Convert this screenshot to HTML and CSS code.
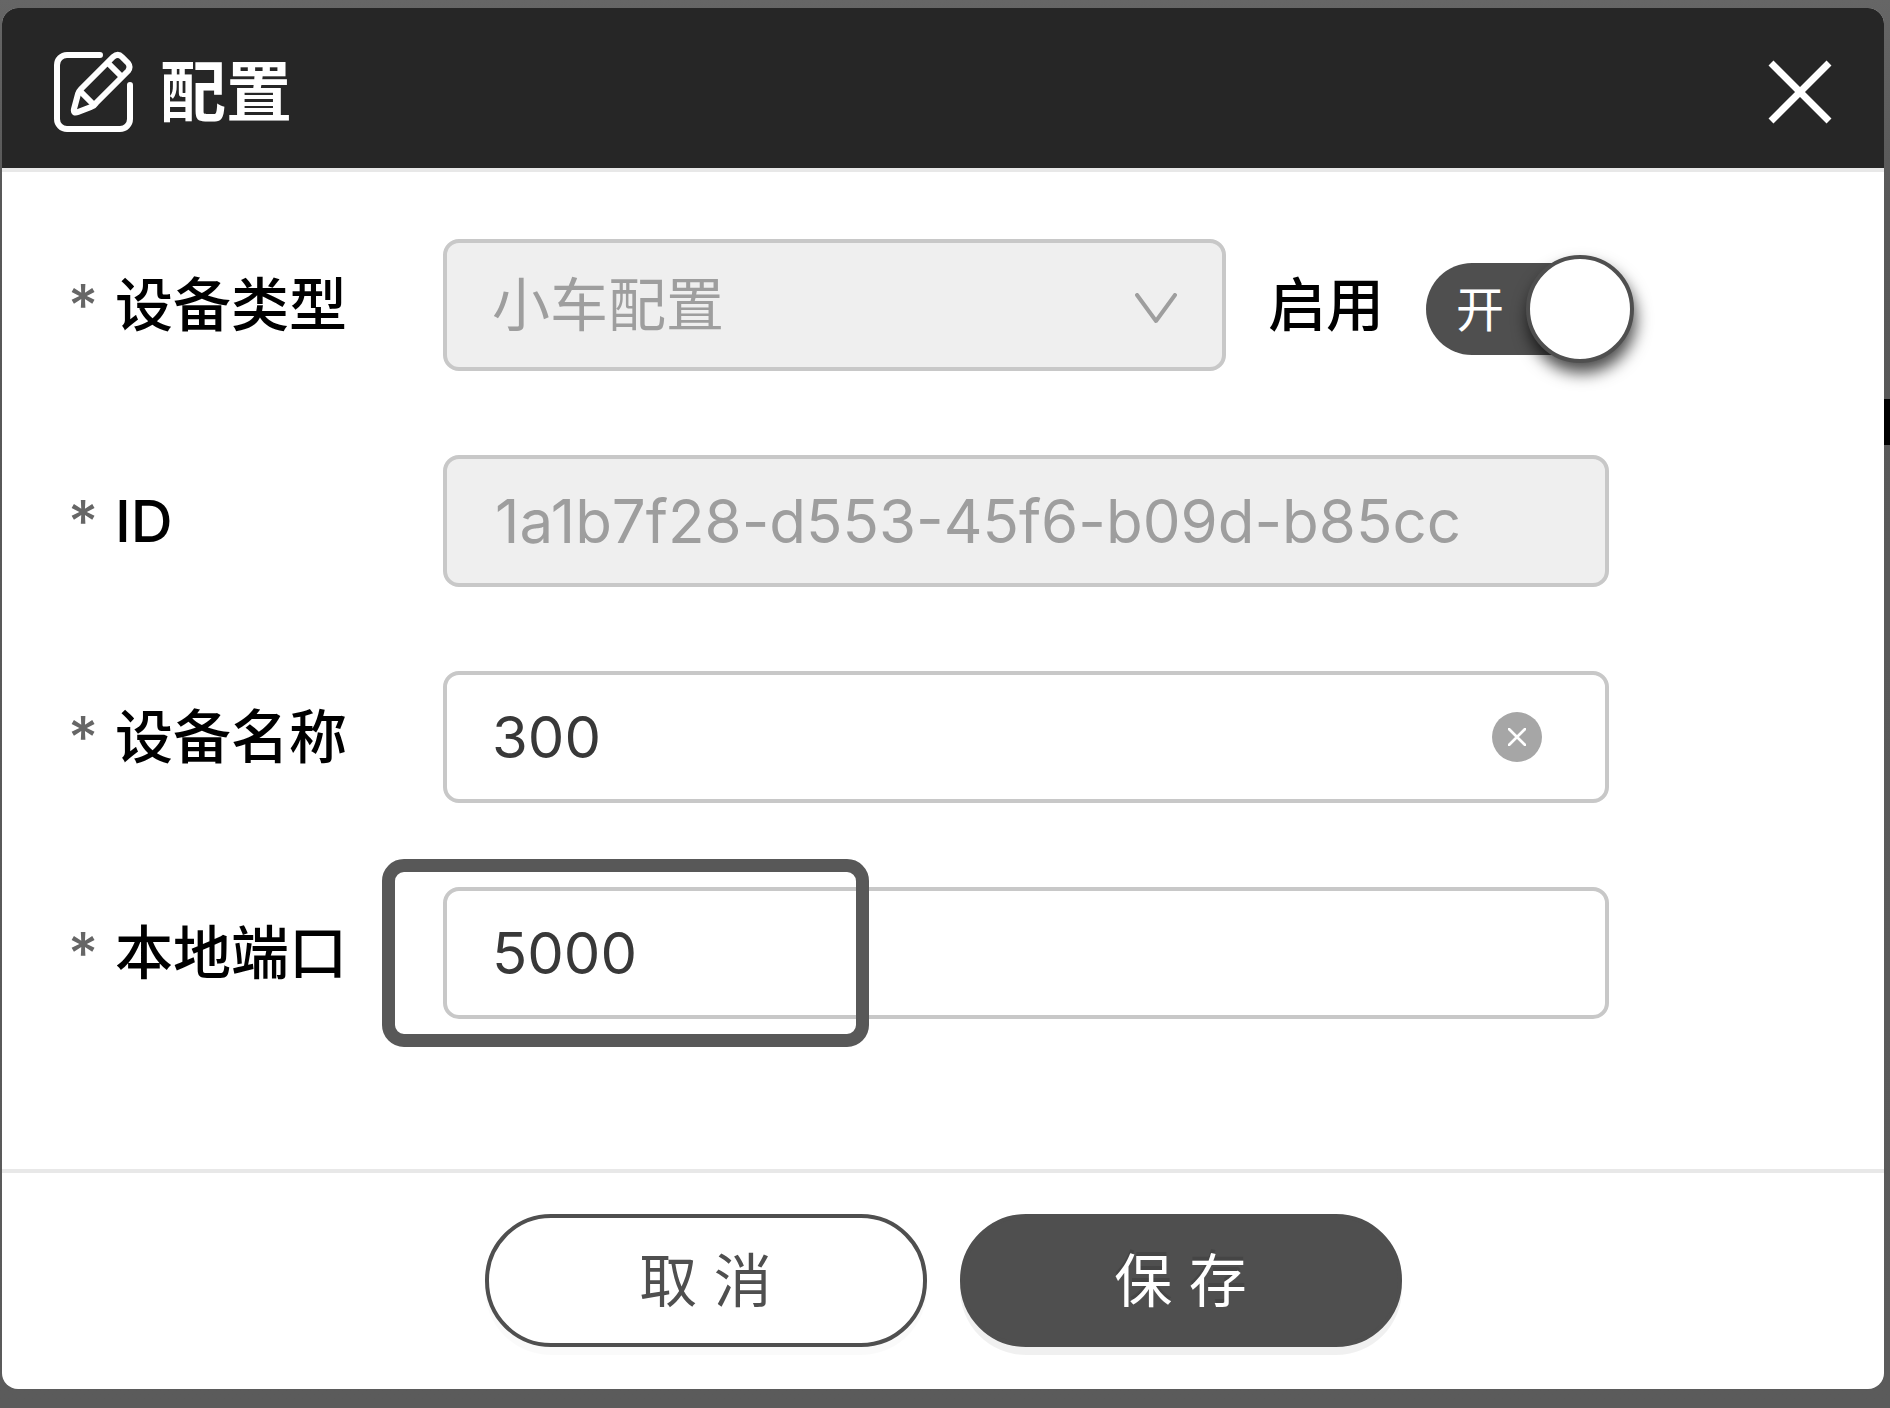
FILE: index.html
```html
<!DOCTYPE html>
<html lang="zh-CN">
<head>
<meta charset="utf-8">
<meta name="viewport" content="width=device-width, initial-scale=1">
<title>配置</title>
<link rel="stylesheet" href="styles.css">
</head>
<body>
<form class="dialog" role="dialog" aria-labelledby="dialog-title">
  <header class="dialog-header">
    <svg class="edit-icon" viewBox="0 0 80 82" aria-hidden="true">
      <path d="M46 4H13a10 10 0 0 0-10 10v54a10 10 0 0 0 10 10h53a10 10 0 0 0 10-10V34"/>
      <path d="M20 58l4-15q1-3 3-5L59 6q5-4 9 0l6 6q3 4 0 8L42 52q-2 3-5 4l-13 5q-5 2-4-3z"/>
      <path d="M54 12l13 13M27 41l12 12"/>
    </svg>
    <h1 class="dialog-title" id="dialog-title">配置</h1>
    <button class="close" type="button" aria-label="关闭">
      <svg viewBox="0 0 64 64" aria-hidden="true"><path d="M3 3l58 58M61 3L3 61"/></svg>
    </button>
  </header>

  <div class="dialog-body">
    <div class="row">
      <label class="label" for="type"><span class="star">*</span>设备类型</label>
      <div class="select-box">
        <select class="control" id="type" disabled><option>小车配置</option></select>
        <svg class="chevron" viewBox="0 0 42 32" aria-hidden="true"><path d="M2 2l19 26L40 2"/></svg>
      </div>
      <label class="switch-label" for="enabled">启用</label>
      <span class="switch">
        <input class="switch-input" id="enabled" type="checkbox" role="switch" checked>
        <span class="switch-text" aria-hidden="true">开</span>
      </span>
    </div>

    <div class="row">
      <label class="label" for="device-id"><span class="star">*</span>ID</label>
      <div class="field">
        <input class="control control-id with-suffix" id="device-id" type="text" value="1a1b7f28-d553-45f6-b09d-b85cc1" disabled>
      </div>
    </div>

    <div class="row">
      <label class="label" for="name"><span class="star">*</span>设备名称</label>
      <div class="field">
        <input class="control with-suffix" id="name" type="text" value="300">
        <button class="clear" type="button" aria-label="清除">
          <svg viewBox="0 0 20 20" aria-hidden="true"><path d="M1 1l18 18M19 1L1 19"/></svg>
        </button>
      </div>
    </div>

    <div class="row">
      <label class="label" for="port"><span class="star">*</span>本地端口</label>
      <div class="field">
        <input class="control" id="port" type="text" value="5000">
        <span class="highlight"></span>
      </div>
    </div>
  </div>

  <footer class="dialog-footer">
    <button class="btn" type="button">取 消</button>
    <button class="btn btn-primary" type="submit">保 存</button>
  </footer>
</form>
</body>
</html>
```

FILE: styles.css
```css
*,
*::before,
*::after {
  box-sizing: border-box;
}

body {
  margin: 0;
  min-height: 100vh;
  padding: 8px 6px 19px 2px;
  background:
    linear-gradient(#000, #000) right 399px / 6px 46px no-repeat,
    linear-gradient(#666 0, #585858 200px, #5b5b5b 100%);
  font-family: Inter, "Noto Sans CJK SC", sans-serif;
  font-size: 58px;
  line-height: 80px;
  color: #000;
}

button,
input,
select {
  margin: 0;
  font: inherit;
}

svg {
  display: block;
  fill: none;
  stroke: currentColor;
  stroke-linecap: round;
  stroke-linejoin: round;
}

.dialog {
  overflow: hidden;
  border-radius: 16px;
  background: #fff;
}

.dialog-header {
  display: flex;
  align-items: center;
  gap: 26px;
  padding: 43px 52px 35px;
  border-bottom: 4px solid #e8e8e8;
  background: #262626;
  color: #fff;
}

.edit-icon {
  width: 80px;
  height: 82px;
  stroke-width: 6px;
}

.dialog-title {
  margin: 0;
  font-size: 66px;
  font-weight: 700;
}

.close {
  margin-left: auto;
  padding: 0;
  border: 0;
  background: none;
  color: #fff;
}

.close svg {
  width: 64px;
  height: 64px;
  stroke-width: 7px;
  stroke-linecap: butt;
}

.dialog-body {
  display: flex;
  flex-direction: column;
  gap: 84px;
  padding: 67px 250px 150px 66px;
}

.row {
  display: flex;
  align-items: center;
}

.label {
  flex: none;
  width: 375px;
}

.label,
.switch-label {
  font-weight: 500;
}

.star {
  display: inline-block;
  width: 47px;
  color: #666;
}

.field,
.select-box {
  position: relative;
  flex: 1;
  min-width: 0;
}

.field {
  margin-right: 25px;
}

.control {
  display: block;
  appearance: none;
  width: 100%;
  height: 132px;
  padding: 0 45px;
  border: 4px solid #c8c8c8;
  border-radius: 16px;
  outline: 0;
  background: #fff;
  color: #383838;
}

.control:disabled {
  background: #efefef;
  color: #9e9e9e;
  opacity: 1;
}

.control-id {
  padding-left: 48px;
  font-size: 60px;
}

.with-suffix {
  padding-right: 146px;
}

.chevron {
  position: absolute;
  top: 54px;
  right: 49px;
  width: 42px;
  height: 32px;
  color: #9e9e9e;
  stroke-width: 4px;
}

.switch-label {
  margin: 0 42px;
}

.switch {
  position: relative;
  flex: none;
  width: 208px;
  padding-top: 8px;
}

.switch-input {
  display: block;
  appearance: none;
  width: 176px;
  height: 92px;
  border-radius: 46px;
  background: #4f4f4f;
}

.switch-input::after {
  content: "";
  position: absolute;
  top: 0;
  right: 0;
  width: 108px;
  height: 108px;
  border: 4px solid #4f4f4f;
  border-radius: 50%;
  background: #fff;
  box-shadow: 2px 10px 16px rgba(0, 0, 0, 0.7);
}

.switch-text {
  position: absolute;
  top: 15px;
  left: 30px;
  color: #fff;
  font-size: 48px;
  pointer-events: none;
}

.clear {
  position: absolute;
  top: 41px;
  right: 67px;
  display: grid;
  place-items: center;
  width: 50px;
  height: 50px;
  padding: 0;
  border: 0;
  border-radius: 50%;
  background: #a6a6a6;
  color: #fff;
}

.clear svg {
  width: 18px;
  height: 18px;
  stroke-width: 3px;
}

.highlight {
  position: absolute;
  top: -28px;
  left: -61px;
  width: 487px;
  height: 188px;
  border: 13px solid #585858;
  border-radius: 22px;
  pointer-events: none;
}

.dialog-footer {
  display: flex;
  justify-content: center;
  gap: 33px;
  padding: 41px 0 42px;
  border-top: 4px solid #e8e8e8;
}

.btn {
  width: 442px;
  height: 133px;
  border: 4px solid #4f4f4f;
  border-radius: 66px;
  background: #fff;
  color: #4f4f4f;
  box-shadow: 0 8px 0 rgba(0, 0, 0, 0.02);
}

.btn-primary {
  background: #4f4f4f;
  color: #fff;
  text-shadow: 0 -4px 0 rgba(0, 0, 0, 0.12);
  box-shadow: 0 8px 0 rgba(0, 0, 0, 0.06);
}
```
